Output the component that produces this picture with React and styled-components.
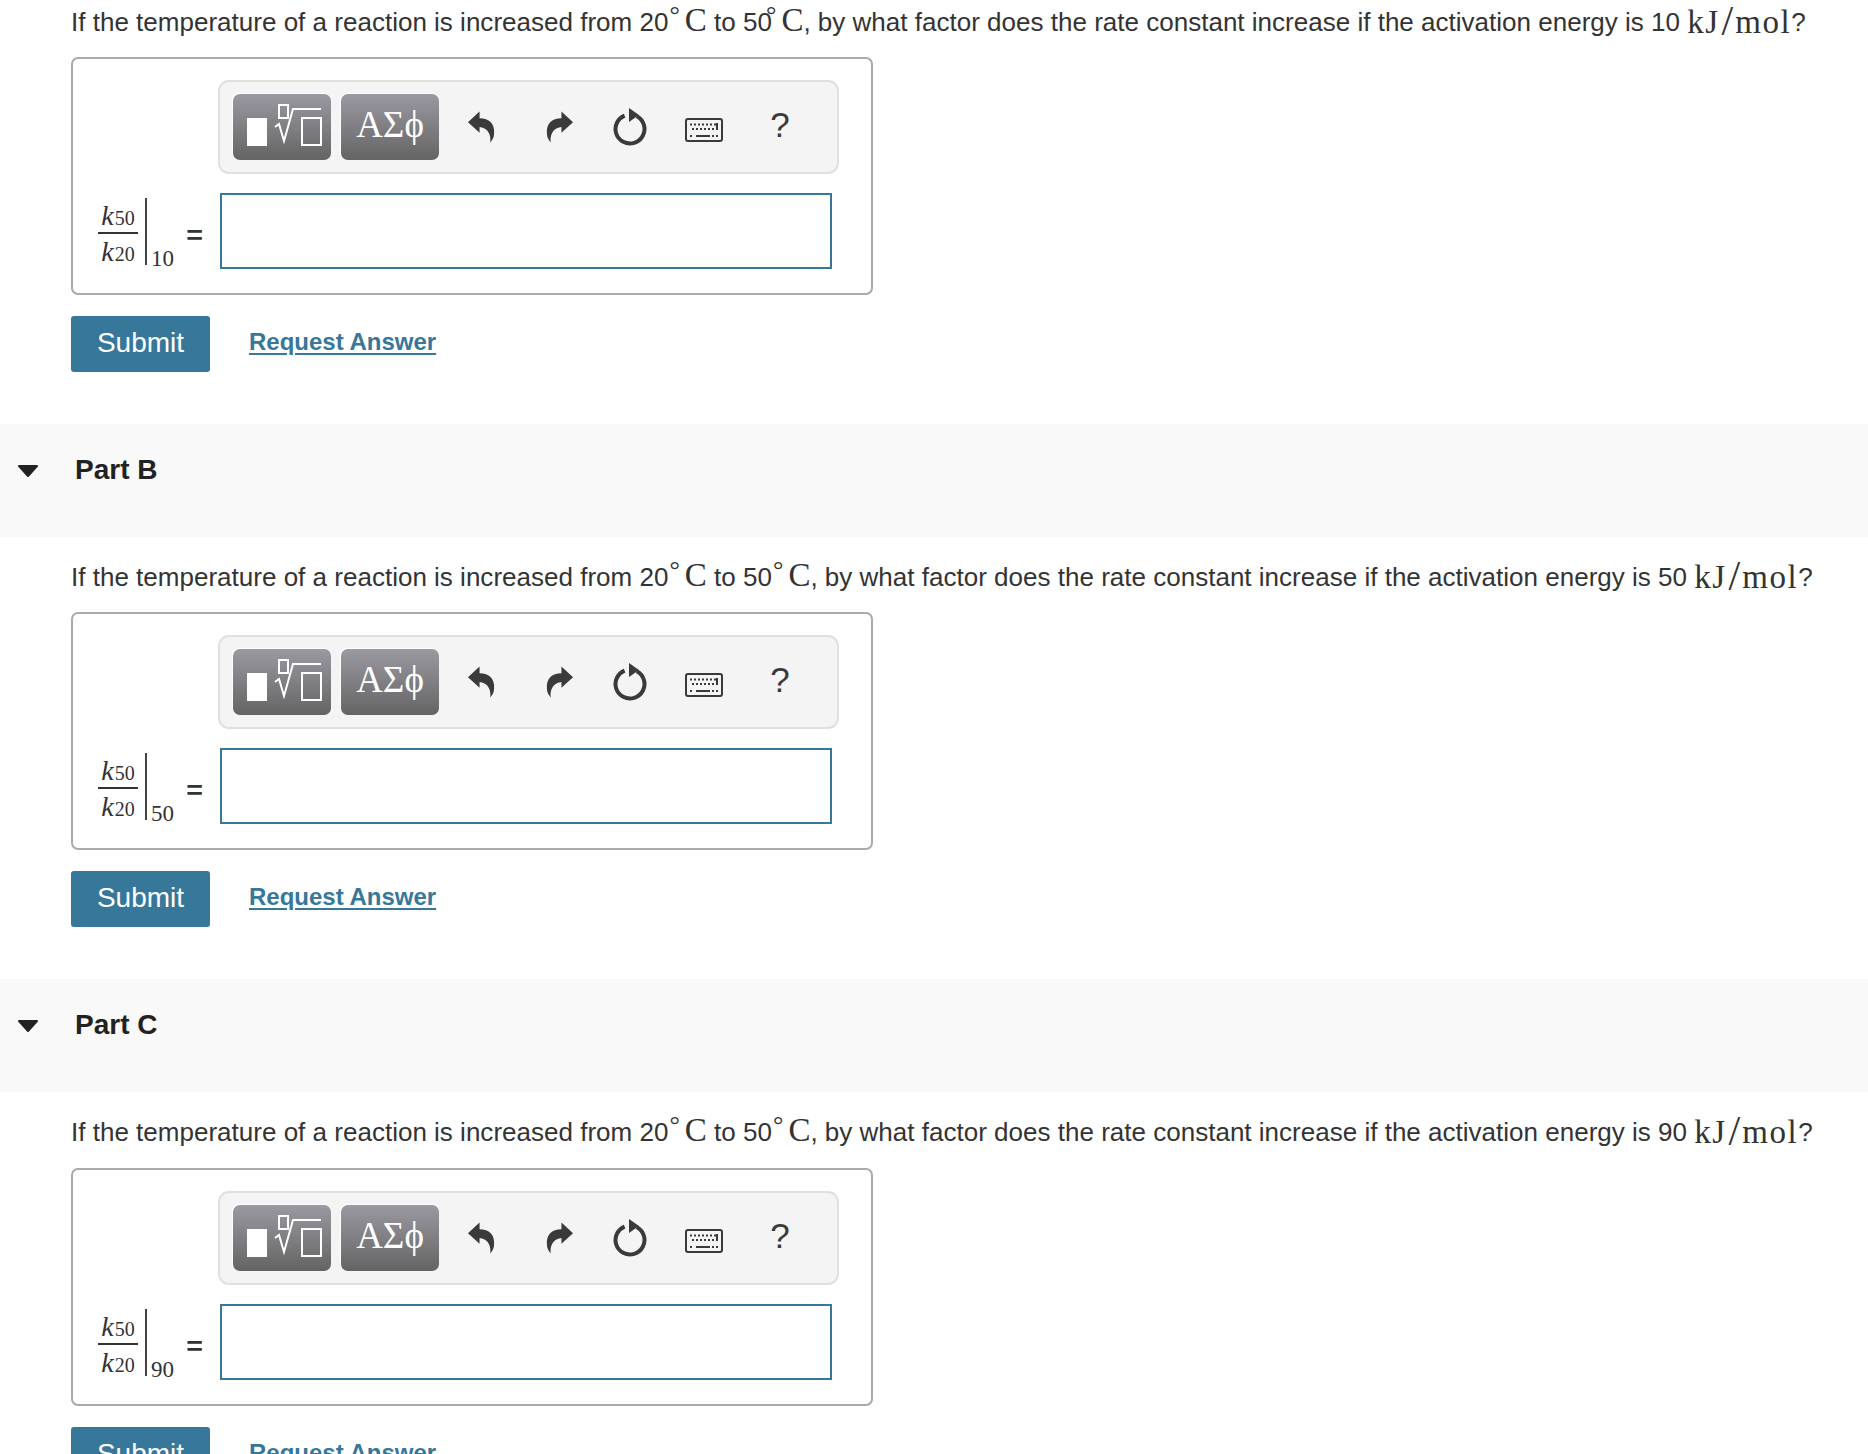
import styled, { createGlobalStyle } from "styled-components";

const GlobalStyle = createGlobalStyle`
  html, body {
    margin: 0;
    height: 1454px;
    overflow: hidden;
    background: #fff;
  }
  body {
    font-family: "Liberation Sans", Arial, sans-serif;
    color: #333;
  }
`;

const Question = styled.p`
  margin: 0;
  padding: ${(p) => p.$top}px 0 0 71px;
  height: ${(p) => p.$height}px;
  box-sizing: border-box;
  font-size: 26px;
  line-height: 40px;
  white-space: nowrap;
  letter-spacing: 0.01px;
`;

const MathText = styled.span`
  font-family: "Liberation Serif", "Times New Roman", serif;
  font-size: 33px;
  letter-spacing: ${(p) => (p.$wide ? 1.5 : 0)}px;
  position: relative;
  top: ${(p) => (p.$wide ? 2 : 0)}px;
`;

const Degree = styled.span`
  font-family: "Liberation Serif", serif;
  font-size: 26px;
  position: relative;
  top: -8px;
  margin: 0 5px 0 ${(p) => (p.$tight ? -6 : 1)}px;
`;

const Slash = styled.span`
  font-family: "Liberation Serif", serif;
  font-size: 42px;
  font-weight: 400;
  line-height: 0;
  position: relative;
  top: 4px;
  margin: 0 2px;
`;

const AnswerBox = styled.div`
  margin-left: 71px;
  width: 802px;
  height: 238px;
  box-sizing: border-box;
  border: 2px solid #aaa;
  border-radius: 7px;
  padding: 21px 0 0 25px;
`;

const Toolbar = styled.div`
  margin-left: 120px;
  width: 621px;
  height: 94px;
  box-sizing: border-box;
  border: 2px solid #e0e0e0;
  border-radius: 11px;
  background: #f4f4f4;
  display: flex;
  align-items: center;
  padding: 0 0 0 13px;
`;

const TemplateButton = styled.div`
  width: 98px;
  height: 66px;
  margin-right: 10px;
  box-sizing: border-box;
  border-radius: 7px;
  background: linear-gradient(#9b99a1, #646464);
  box-shadow: -1px -1px 0 #fff;
  color: #fff;
  display: flex;
  align-items: center;
  justify-content: center;
  font-family: "Liberation Serif", serif;
  font-size: 37px;
  padding-bottom: ${(p) => (p.$flush ? 0 : 5)}px;
`;

const ToolIcons = styled.div`
  display: flex;
  align-items: center;
  margin-left: 5px;
  height: 74px;
`;

const ToolSlot = styled.div`
  width: ${(p) => p.$width}px;
  display: flex;
  justify-content: center;
  align-items: center;
  color: #3a3a3a;
  padding-top: ${(p) => p.$drop || 0}px;
`;

const HelpMark = styled.span`
  font-size: 35px;
  color: #3a3a3a;
  margin-top: -4px;
`;

const AnswerRow = styled.div`
  display: flex;
  align-items: flex-start;
  margin-top: 19px;
`;

const Expression = styled.div`
  width: 122px;
  height: 76px;
  display: flex;
  font-family: "Liberation Serif", serif;
  color: #333;
`;

const Fraction = styled.div`
  width: 40px;
  margin-top: 6px;
  display: flex;
  flex-direction: column;
  align-items: center;
`;

const FractionPart = styled.div`
  height: 33px;
  line-height: ${(p) => (p.$under ? 36 : 33)}px;
  font-size: 25px;
  white-space: nowrap;
  ${(p) => p.$under && "border-top: 2px solid #333; align-self: stretch; text-align: center;"}
`;

const Variable = styled.i`
  font-size: 28px;
`;

const Index = styled.span`
  font-size: 20px;
  margin-left: 1px;
`;

const EvalBar = styled.div`
  margin: 5px 0 0 7px;
  width: 2px;
  height: 67px;
  background: #444;
`;

const EvalValue = styled.div`
  font-size: 23px;
  margin: 53px 0 0 4px;
  width: 29px;
`;

const EqualSign = styled.div`
  font-family: "Liberation Sans", sans-serif;
  font-size: 26px;
  margin-top: 27px;
  margin-left: 7px;
  transform: scaleX(1.1);
  font-weight: 700;
`;

const AnswerInput = styled.input`
  width: 612px;
  height: 76px;
  box-sizing: border-box;
  border: 2px solid #37779a;
  background: #fff;
  outline: none;
  display: block;
`;

const Actions = styled.div`
  display: flex;
  align-items: center;
  margin: 21px 0 52px 71px;
  gap: 39px;
`;

const SubmitButton = styled.button`
  width: 139px;
  height: 56px;
  border: none;
  border-radius: 3px;
  background: #37779a;
  color: #fff;
  font-family: "Liberation Sans", Arial, sans-serif;
  font-size: 28px;
  padding: 0 0 2px;
`;

const AnswerLink = styled.a`
  color: #37779a;
  font-size: 24px;
  font-weight: 700;
  text-decoration: underline;
  text-underline-offset: 3px;
  margin-top: -4px;
`;

const PartHeader = styled.div`
  height: 113px;
  background: #f9f9f9;
  display: flex;
  align-items: flex-start;
  padding: 28px 0 0 17px;
  box-sizing: border-box;
`;

const Caret = styled.svg`
  display: block;
  margin-top: 12px;
`;

const PartTitle = styled.h2`
  margin: 0 0 0 36px;
  font-size: 28px;
  line-height: 36px;
  font-weight: 700;
  color: #222;
`;

const UndoIcon = ({ flip }) => (
  <svg width="29" height="34" viewBox="0 0 30 34" style={flip ? { transform: "scaleX(-1)" } : undefined}>
    <path
      fill="currentColor"
      d="M1 12 L13 1 L13 8 C23 8 29 14 28 24 C28 28 26 31 24 33 C25 27 23 18 13 17 L13 23 Z"
    />
  </svg>
);

const ResetIcon = () => (
  <svg width="36" height="38" viewBox="0 0 36 38">
    <circle
      cx="18"
      cy="21"
      r="14.5"
      fill="none"
      stroke="currentColor"
      strokeWidth="4"
      strokeDasharray="78 13"
      transform="rotate(-62 18 21)"
    />
    <path fill="currentColor" d="M17 0 L27 7 L17 14 Z" />
  </svg>
);

const KeyboardIcon = () => (
  <svg width="38" height="24" viewBox="0 0 38 24">
    <rect x="1" y="1" width="36" height="22" rx="2" fill="none" stroke="currentColor" strokeWidth="2" />
    <path
      stroke="currentColor"
      strokeWidth="2"
      strokeDasharray="2 2"
      d="M5 6.5 H33 M7 11 H29 M5 18 H9 M27 18 H33"
    />
    <path stroke="currentColor" strokeWidth="2" d="M11 18 H25 M32 5 V12" />
  </svg>
);

const TemplateIcon = () => (
  <svg width="98" height="66" viewBox="0 0 98 66">
    <rect x="14" y="24" width="20" height="28" fill="#fff" />
    <rect x="69" y="24" width="19" height="27" fill="none" stroke="#fff" strokeWidth="2" />
    <rect x="46" y="11" width="9" height="13" fill="none" stroke="#fff" strokeWidth="2" />
    <path fill="none" stroke="#fff" strokeWidth="2" d="M42 33 L46 30 L51 47 L60 15 H88" />
  </svg>
);

const CaretIcon = () => (
  <Caret width="22" height="14" viewBox="0 0 22 14">
    <path
      fill="#222"
      stroke="#222"
      strokeWidth="2"
      strokeLinejoin="round"
      d="M2 2 H20 L11 12 Z"
    />
  </Caret>
);

const Expr = ({ value }) => (
  <Expression>
    <Fraction>
      <FractionPart>
        <Variable>k</Variable>
        <Index>50</Index>
      </FractionPart>
      <FractionPart $under>
        <Variable>k</Variable>
        <Index>20</Index>
      </FractionPart>
    </Fraction>
    <EvalBar />
    <EvalValue>{value}</EvalValue>
    <EqualSign>=</EqualSign>
  </Expression>
);

const Section = ({ energy, top, height, tight }) => (
  <section>
    <Question $top={top} $height={height}>
      If the temperature of a reaction is increased from 20
      <Degree>°</Degree>
      <MathText>C</MathText> to 50
      <Degree $tight={tight}>°</Degree>
      <MathText>C</MathText>, by what factor does the rate constant increase if the activation
      energy is {energy} <MathText $wide>kJ</MathText>
      <Slash>/</Slash>
      <MathText $wide>mol</MathText>?
    </Question>
    <AnswerBox>
      <Toolbar>
        <TemplateButton $flush>
          <TemplateIcon />
        </TemplateButton>
        <TemplateButton>ΑΣϕ</TemplateButton>
        <ToolIcons>
          <ToolSlot $width={54}>
            <UndoIcon />
          </ToolSlot>
          <ToolSlot $width={102}>
            <UndoIcon flip />
          </ToolSlot>
          <ToolSlot $width={40}>
            <ResetIcon />
          </ToolSlot>
          <ToolSlot $width={108} $drop={6}>
            <KeyboardIcon />
          </ToolSlot>
          <ToolSlot $width={44}>
            <HelpMark>?</HelpMark>
          </ToolSlot>
        </ToolIcons>
      </Toolbar>
      <AnswerRow>
        <Expr value={energy} />
        <AnswerInput />
      </AnswerRow>
    </AnswerBox>
    <Actions>
      <SubmitButton>Submit</SubmitButton>
      <AnswerLink>Request Answer</AnswerLink>
    </Actions>
  </section>
);

export default function App() {
  return (
    <>
      <GlobalStyle />
      <Section energy={10} top={0} height={57} tight />
      <PartHeader>
        <CaretIcon />
        <PartTitle>Part B</PartTitle>
      </PartHeader>
      <Section energy={50} top={18} height={75} />
      <PartHeader>
        <CaretIcon />
        <PartTitle>Part C</PartTitle>
      </PartHeader>
      <Section energy={90} top={18} height={76} />
    </>
  );
}
